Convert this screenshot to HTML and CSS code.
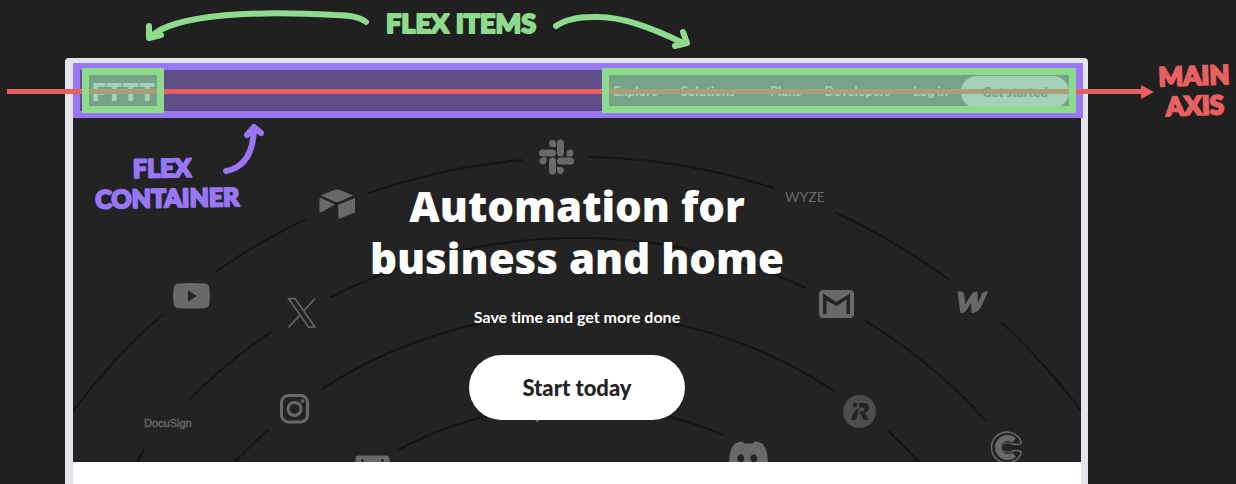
FILE: index.html
```
<!DOCTYPE html>
<html lang="en">
<head>
<meta charset="utf-8">
<title>Flex container and main axis</title>
<link rel="stylesheet" href="styles.css">
</head>
<body>
<main class="stage">
  <div class="frame">
    <header class="site-header">
      <div class="axis"></div>
      <a class="flex-item logo" href="#">FTTT</a>
      <nav class="flex-item nav">
        <a class="nav-link" href="#">Explore</a>
        <a class="nav-link nav-menu" href="#">Solutions</a>
        <a class="nav-link" href="#">Plans</a>
        <a class="nav-link" href="#">Developers</a>
        <a class="nav-link" href="#">Log in</a>
        <a class="nav-cta" href="#">Get started</a>
      </nav>
    </header>
    <section class="hero">
      <svg class="orbits" viewBox="73 118 1008 344" preserveAspectRatio="xMidYMin slice" aria-hidden="true">
        <g fill="none" stroke="#141414" stroke-width="2" stroke-linecap="round">
          <path d="M73 411A626 626 0 0 1 163 314M217 271A626 626 0 0 1 306 219M369 193A626 626 0 0 1 522 160M590 157A626 626 0 0 1 773 188M836 213A626 626 0 0 1 948 279M1001 322A626 626 0 0 1 1081 411"/>
          <path d="M137 462L144 450M190 399A545 545 0 0 1 271 332M331 297A545 545 0 0 1 806 288M866 321A545 545 0 0 1 986 421"/>
          <path d="M235 462A466 466 0 0 1 268 430M322 389A466 466 0 0 1 834 391M888 431A466 466 0 0 1 919 462"/>
          <path d="M398 450A376 376 0 0 1 723 435"/>
        </g>
        <g fill="#696969">
          <!-- Slack -->
          <g id="slack-arm">
            <rect x="557" y="139.500" width="7" height="17" rx="3.500"/>
            <path d="M556 147v-4a3.500 3.500 0 1 0-3.500 4z"/>
          </g>
          <use href="#slack-arm" transform="rotate(90 556.500 157)"/>
          <use href="#slack-arm" transform="rotate(180 556.500 157)"/>
          <use href="#slack-arm" transform="rotate(270 556.500 157)"/>
          <!-- Airtable -->
          <path d="M321 195.500L334 190q3-1 6 0l13 5.500-13 6q-3 1-6 0zM319.500 199q0-1.500 1.500-1l14 6.500-13 7.500q-2.500 1-2.500-1zM338 205l17-7v14.500L338.500 219z"/>
          <!-- YouTube -->
          <path fill-rule="evenodd" d="M178 283.500q13-1 27 0 4 .5 4.500 5 1 7.500 0 15-.5 4-4.500 4.500-14 1-27 0-4-.5-4.500-4.500-1-7.500 0-15 .5-4.500 4.500-5zM188 290.500v11l9-5.500z"/>
          <!-- Gmail -->
          <path fill-rule="evenodd" d="M823 290h27a4 4 0 0 1 4 4v20a4 4 0 0 1-4 4h-27a4 4 0 0 1-4-4v-20a4 4 0 0 1 4-4zM823 293.500v20.500h3.500v-13.500L836.500 306l10-6.500V314h3.500v-20.500L836.500 302z"/>
          <!-- Webflow -->
          <path d="M957.500 291.500h2c4 0 5 2 5 5l.5 8 6-9.500c2-3 4-3.500 6.500-3.500l.5 12 3-8c1.500-4 4-4 7-4l-6 13.500c-3 6-5.500 7.500-10.500 8l-.5-10-4 6.500c-2 3-3.500 3.500-6.500 3.500z"/>
          <!-- Discord -->
          <path fill-rule="evenodd" d="M729 464q0-15 6-20.500 4-2 7.500-2l1.500 2h9l1.500-2q4 0 7.500 2 6 5.500 6 20.500zM742 454.500a3.500 4 0 1 0 0 7.500 3.500 4 0 0 0 0-7.500zM755 454.500a3.500 4 0 1 0 0 7.500 3.500 4 0 0 0 0-7.500z"/>
          <path d="M535 420h5l-2.500 2.500z"/>
          <!-- Film card -->
          <path d="M355.500 464v-5q0-3.500 3.500-3.500h27q3.500 0 3.500 3.500v5z"/>
        </g>
        <g fill="none" stroke="#696969">
          <!-- X -->
          <path stroke-width="1.500" d="M288.500 298.500h6.500l20 28.500h-6.500zM288.500 327.500l12-13M315 298.500l-11.500 12.500"/>
          <!-- Instagram -->
          <rect x="281.500" y="395.500" width="26" height="26.500" rx="7" stroke-width="3"/>
          <circle cx="294.500" cy="409" r="6.500" stroke-width="3"/>
          <!-- Calendly -->
          <path stroke-width="1.500" d="M1021 441a15.500 15.500 0 1 0 0 13q1-2-1-3-5-1-8 .500M1021 441q1 2-1 3-5 1-8-.500"/>
          <path stroke-width="6" d="M1014 440.500a9.500 9.500 0 1 0 0 14"/>
          <path stroke-width="1" d="M1012 444.500q-3-2.500-6-1.500a4.500 4.500 0 0 0 0 9q3 1 6-1.500"/>
        </g>
        <circle cx="302.500" cy="401" r="1.700" fill="#696969"/>
        <g fill="#232323">
          <circle cx="362.500" cy="460.500" r="1.500"/>
          <circle cx="382.500" cy="460.500" r="1.500"/>
        </g>
        <!-- iRobot -->
        <circle cx="859.500" cy="411.500" r="16.500" fill="#4d4d4d"/>
        <circle cx="855" cy="405" r="2.300" fill="#232323"/>
        <path fill="#232323" fill-rule="evenodd" d="M859 403h5q5 0 5 5 0 4-4 5l4 7h-5.500l-4.500-8.500h4q1.500-.5 1.500-2t-1.500-2h-4q-1.500 8-3 12.500h-5q2-9 8-12.500z"/>
        <text class="brand-wyze" x="785" y="202">WYZE</text>
        <text class="brand-docusign" x="144" y="427">DocuSign</text>
      </svg>
      <div class="hero-copy">
        <h1 class="hero-title">Automation for<br>business and home</h1>
        <p class="hero-sub">Save time and get more done</p>
        <button class="hero-button" type="button">Start today</button>
      </div>
    </section>
  </div>

  <svg class="note note-items" viewBox="0 0 560 56" role="img" aria-label="Flex items">
    <path d="M226 22Q217 15 195 15Q65 8 20 30L10 37M9 26V38L21 35"/>
    <text x="246" y="33">FLEX ITEMS</text>
    <path d="M416 26Q430 16 459 17Q490 17 543 43M543 32L547 43L535 46"/>
  </svg>
  <svg class="note note-container" viewBox="0 0 180 100" role="img" aria-label="Flex container">
    <g transform="rotate(-1 90 60)">
      <text x="43" y="59">FLEX</text>
      <text x="5" y="89">CONTAINER</text>
    </g>
    <path d="M136 53Q163 48 164 10M157 17L164 9L171 15"/>
  </svg>
  <p class="note note-axis">MAIN<br>AXIS</p>
</main>
</body>
</html>
```
FILE: styles.css
```
* {
  box-sizing: border-box;
}

body {
  margin: 0;
  background: #202020;
  font-family: Lato, "Open Sans", sans-serif;
  font-variant-ligatures: none;
}

a {
  color: inherit;
  text-decoration: none;
}

.stage {
  position: relative;
  min-height: 100vh;
  padding: 58px 148px 0 65px;
  display: flex;
  overflow: hidden;
}

.frame {
  flex: 1;
  padding: 5px 7px 0 8px;
  border-radius: 4px 4px 0 0;
  background: linear-gradient(#fff, #fff) content-box, #e5e3ea;
}

.site-header {
  position: relative;
  z-index: 1;
  display: flex;
  justify-content: space-between;
  align-items: center;
  height: 55px;
  margin-right: -2px;
  padding: 0 7px 0 9px;
  background: #5e4d87;
  box-shadow: inset 0 0 0 7px #9777f5;
}

.axis {
  position: absolute;
  top: 26px;
  left: -66px;
  right: -60px;
  height: 5px;
  background: #e96060;
}

.axis::after {
  content: "";
  position: absolute;
  top: -4px;
  right: -11px;
  border: solid transparent;
  border-width: 7px 0 7px 13px;
  border-left-color: #e96060;
}

.flex-item {
  position: relative;
  display: flex;
  align-items: center;
  height: 45px;
  border: 7px solid #8edb8e;
  background: #76a387;
  color: #a5d1b9;
}

.flex-item::after {
  content: "";
  position: absolute;
  top: 14px;
  left: 0;
  right: 0;
  height: 5px;
  background: #a8a077;
}

.logo {
  padding: 3px 2px 0 3px;
  font: 900 24px Inter, sans-serif;
}

.nav {
  gap: 23px;
  padding-left: 4px;
  font-size: 13px;
  font-weight: 900;
  overflow: hidden;
}

.nav-menu {
  margin-right: 12px;
}

.nav-cta {
  display: flex;
  align-items: center;
  justify-content: center;
  width: 108px;
  height: 32px;
  margin: 2px 0 0 -10px;
  border-radius: 16px;
  background: #a5d1b9;
  color: #76a387;
}

.hero {
  position: relative;
  height: 344px;
  overflow: hidden;
  background: #232323;
}

.orbits {
  position: absolute;
  inset: 0;
  width: 100%;
  height: 100%;
}

.brand-wyze {
  font: 400 14px Lato, sans-serif;
  fill: #696969;
}

.brand-docusign {
  font: 400 11px "Liberation Sans", sans-serif;
  fill: #696969;
  stroke: #696969;
  stroke-width: 0.4px;
}

.hero-copy {
  position: relative;
  display: flex;
  flex-direction: column;
  align-items: center;
  padding-top: 62px;
  color: #fff;
  text-align: center;
}

.hero-title {
  margin: 0;
  font-family: "Open Sans", sans-serif;
  font-size: 42px;
  font-weight: 800;
  line-height: 52px;
}

.hero-sub {
  margin: 21px 0 0;
  font-size: 16px;
  font-weight: 700;
  line-height: 24px;
}

.hero-button {
  width: 216px;
  height: 65px;
  margin-top: 26px;
  border: 0;
  border-radius: 33px;
  background: #fff;
  color: #232323;
  font: 900 22px Lato, sans-serif;
}

.note {
  position: absolute;
  z-index: 2;
  margin: 0;
  font: 900 27px/30px Lato, sans-serif;
}

.note path {
  fill: none;
  stroke: currentColor;
  stroke-width: 6px;
  stroke-linecap: round;
  stroke-linejoin: round;
}

.note text {
  fill: currentColor;
  stroke: currentColor;
  stroke-width: 2px;
  stroke-linejoin: round;
}

.note-items {
  top: 0;
  left: 140px;
  width: 560px;
  height: 56px;
  color: #8edb8e;
}

.note-container {
  top: 118px;
  left: 90px;
  width: 180px;
  height: 100px;
  color: #9777f5;
  font-size: 25px;
}

.note-axis {
  top: 60px;
  right: 6px;
  color: #e96060;
  font-size: 26px;
  text-align: center;
  -webkit-text-stroke: 2px #e96060;
  transform: rotate(-2deg);
}
```
